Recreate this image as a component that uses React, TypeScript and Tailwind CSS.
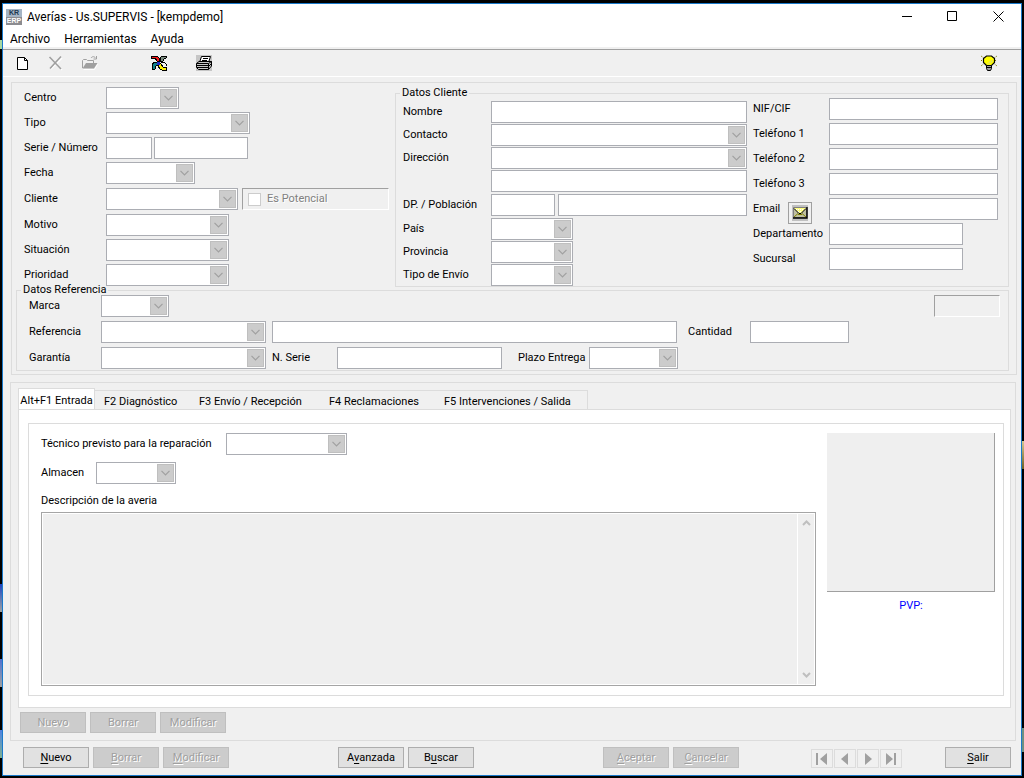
import React, { useState } from 'react';

const tabs = [
  { name: 'F2 Diagnóstico', width: 'w-[95px]' },
  { name: 'F3 Envío / Recepción', width: 'w-[130px]' },
  { name: 'F4 Reclamaciones', width: 'w-[115px]' },
  { name: 'F5 Intervenciones / Salida', width: 'w-[152px]' },
];

const phoneFields = [
  { id: 'nif', label: 'NIF/CIF' },
  { id: 'telefono1', label: 'Teléfono 1' },
  { id: 'telefono2', label: 'Teléfono 2' },
  { id: 'telefono3', label: 'Teléfono 3' },
];

type FieldProps = { id: string; label?: string; className?: string };

const Combo: React.FC<FieldProps> = ({ id, label, className = '' }) => (
  <div className={`relative h-[22px] shrink-0 ${className}`}>
    <select
      id={id}
      aria-label={label}
      disabled
      className="block w-full h-full appearance-none bg-white border border-[#abadb3] px-1 opacity-100"
    ></select>
    <span className="absolute right-[2px] top-[2px] w-[17px] h-[18px] bg-[#cccccc] border border-[#bfbfbf] flex items-center justify-center pointer-events-none">
      <svg className="w-[9px] h-[6px]" viewBox="0 0 9 6" fill="none" stroke="#a0a0a0" strokeWidth="1.2">
        <path d="M0.5 0.8L4.5 4.8L8.5 0.8" />
      </svg>
    </span>
  </div>
);

const TextBox: React.FC<FieldProps> = ({ id, label, className = '' }) => (
  <input
    id={id}
    aria-label={label}
    type="text"
    disabled
    className={`block h-[22px] min-w-0 bg-white border border-[#abadb3] px-1 ${className}`}
  />
);

type RowProps = { id: string; label: string; labelWidth: string; className?: string; children: React.ReactNode };

const Row: React.FC<RowProps> = ({ id, label, labelWidth, className = 'h-[22px]', children }) => (
  <div className={`flex items-center ${className}`}>
    <label htmlFor={id} className={`shrink-0 whitespace-nowrap ${labelWidth}`}>{label}</label>
    {children}
  </div>
);

type ButtonProps = { text: string; hotkey?: number; disabled?: boolean };

const PushButton: React.FC<ButtonProps> = ({ text, hotkey, disabled }) => (
  <button
    type="button"
    disabled={disabled}
    className={`w-[66px] h-[21px] border text-center leading-[19px] ${
      disabled
        ? 'bg-[#cccccc] border-[#bfbfbf] text-[#a0a0a0] [text-shadow:1px_1px_0_#ffffff]'
        : 'bg-[#e1e1e1] border-[#adadad] text-black'
    }`}
  >
    {hotkey === undefined ? text : (
      <>
        {text.slice(0, hotkey)}
        <span className="underline underline-offset-2">{text[hotkey]}</span>
        {text.slice(hotkey + 1)}
      </>
    )}
  </button>
);

const NewIcon = () => (
  <svg className="w-4 h-4" viewBox="0 0 16 16" fill="none">
    <path d="M3.5 2.5H10.5L13.5 5.5V14.5H3.5Z" fill="#fff" stroke="#000" />
    <path d="M10.5 2.5V5.5H13.5" stroke="#000" />
  </svg>
);

const DeleteIcon = () => (
  <svg className="w-4 h-4" viewBox="0 0 16 16" fill="none">
    <path d="M2 3L14 15M14 3L3 14" stroke="#fff" strokeWidth="1.4" />
    <path d="M1.5 2L13 14M13 1.5L2 13.5" stroke="#a0a0a0" strokeWidth="1.6" />
  </svg>
);

const OpenIcon = () => (
  <svg className="w-4 h-4" viewBox="0 0 16 16" fill="none">
    <path d="M1.5 14.5H12.5L15.8 8.5" stroke="#fff" />
    <path d="M0.5 13V5.5L1.5 4.5H4.5L5.5 5.5H11.5V8" stroke="#a0a0a0" />
    <path d="M0.5 13.5L4 8H15.5L12 13.5Z" fill="#a0a0a0" />
    <path d="M9 3C10.5 1 12.5 1.5 13.5 3M14.5 1V4H11.5" stroke="#a0a0a0" />
  </svg>
);

const PinwheelIcon = () => (
  <svg className="w-4 h-4" viewBox="0 0 16 16" fill="none" shapeRendering="crispEdges">
    <path d="M0 1H6L8 3V7L6 6L4 3L0 3Z" fill="#f01818" stroke="#000" />
    <path d="M15 1H11L9 3V7L12 6L13 4L15 3Z" fill="#7b8c80" stroke="#000" />
    <path d="M7 7H4L1 9V15L4 14L5 11L8 9Z" fill="#108088" stroke="#000" />
    <path d="M8 8L7 11L9 14L11 15H15V12H12L10 9Z" fill="#fcf000" stroke="#000" />
    <path d="M10 7H13L15 9V11" stroke="#000" />
    <path d="M6 7H9V10H6Z" fill="#2030c8" />
  </svg>
);

const PrinterIcon = () => (
  <svg className="w-4 h-4" viewBox="0 0 16 16" stroke="#000" fill="none">
    <path d="M0 0H16V16H0Z" fill="#c6c6c6" stroke="none" />
    <path d="M3.5 7.5L5.5 1.5H14.5L12.5 7.5" fill="#fff" />
    <path d="M7 3.5H12M6 5.5H11" />
    <path d="M0.5 8.5L3 6.5H15.5V11L12.5 14.5H2.5L0.5 12.5Z" fill="#c6c6c6" />
    <path d="M0.5 8.5H12.5V14.5M12.5 8.5L15.5 6.5M1 10.5H12M1 12.5H12M13 11L15.5 8.5" />
  </svg>
);

const BulbIcon = () => (
  <svg className="w-4 h-4" viewBox="0 0 16 16" fill="none">
    <path d="M0 1L3 3M16 1L13 3M0 5.5H2M14 5.5H16M0 11L3 8.5M16 11L13 8.5" stroke="#808000" strokeDasharray="1 1" />
    <path d="M5.5 10.5L2.500 7.500V3.500L5.500 1H10.500L13.500 3.500V7.500L10.500 10.500Z" fill="#ffff00" stroke="#000" strokeWidth="1.2" />
    <path d="M8 9.500L12.500 5M6.500 8.500L11 5.500" stroke="#c0c0c0" strokeDasharray="1 1" />
    <path d="M5.500 10.500H10.500V13.500L9.500 15.500H6.500L5.500 13.500Z" fill="#a0a0a0" stroke="#000" />
    <path d="M5.500 12.500H10.500" stroke="#000" />
  </svg>
);

const MailIcon = () => (
  <svg className="w-4 h-4" viewBox="0 0 16 16" fill="none">
    <path d="M0 0H16V16H0Z" fill="#c0c0c0" />
    <path d="M1.5 2.5H14.5V12.5H1.5Z" fill="#c0c0a0" stroke="#808080" />
    <path d="M2 3H14L8 9Z" fill="#ffff80" />
    <path d="M4 4.500H12M6 6.500H10" stroke="#fff" strokeDasharray="1 1" />
    <path d="M2 12L6 8.500M14 12L10 8.500M6 9.500H10" stroke="#808000" />
    <path d="M2 3.500L7 8.500H9L14 3.500" stroke="#000" />
    <path d="M15 2V13H1" stroke="#000" strokeWidth="1.400" />
  </svg>
);

const navIcons = [
  { name: 'Primero', d: 'M0 1H2V13H0ZM11 1V13L4 7Z' },
  { name: 'Anterior', d: 'M9 1V13L2 7Z' },
  { name: 'Siguiente', d: 'M3 1V13L10 7Z' },
  { name: 'Último', d: 'M1 1V13L8 7ZM9 1H11V13H9Z' },
];

// bits of the desktop left and right of the window
const Desktop = () => (
  <div className="absolute inset-0 overflow-hidden pointer-events-none" aria-hidden="true">
    <div className="absolute left-0 top-10 w-[2px] h-[9px] bg-[#a8d8a0]"></div>
    <div className="absolute left-0 top-[584px] w-[2px] h-[28px] bg-gradient-to-b from-[#2040c0] to-[#a0a0a0]"></div>
    <div className="absolute left-0 top-[659px] w-[2px] h-[28px] bg-gradient-to-b from-[#5070d0] to-[#a0a0a0]"></div>
    <div className="absolute left-0 top-[730px] w-[2px] h-[28px] bg-gradient-to-b from-[#5080e0] to-[#80b090]"></div>
    <div className="absolute right-0 top-[441px] w-[2px] h-[28px] bg-gradient-to-b from-[#d8c890] to-[#706020]"></div>
    <div className="absolute right-0 top-[728px] w-[2px] h-[24px] bg-[#709080]"></div>
  </div>
);

const App: React.FC = () => {
  const [activeTab, setActiveTab] = useState('Alt+F1 Entrada');

  return (
    <div className="relative min-h-screen bg-black p-[2px] pt-[3px] flex font-[Roboto,'Liberation_Sans',sans-serif] text-[11px] leading-[14px] text-black">
      <Desktop />
      <div className="relative flex-1 min-w-0 flex flex-col bg-[#f0f0f0] border border-[#1979ca]">
        {/* Title bar */}
        <header className="flex items-center h-[25px] pl-[3px] bg-white text-[12px] leading-4">
          <span className="w-4 h-4 shrink-0 flex flex-col text-center font-['Liberation_Sans',Arial,sans-serif] text-[7px] leading-2 font-bold">
            <span className="bg-[#a4b4c4] text-[#203850]">KR</span>
            <span className="bg-[#8c8c90] text-white">ERP</span>
          </span>
          <h1 className="ml-[5px] flex-1 whitespace-nowrap">Averías - Us.SUPERVIS - [kempdemo]</h1>
          <button type="button" aria-label="Minimizar" className="w-[45px] h-full flex items-center justify-center">
            <svg className="w-[11px] h-[11px]" viewBox="0 0 11 11" stroke="#000"><path d="M0 5.5H10" /></svg>
          </button>
          <button type="button" aria-label="Maximizar" className="w-[45px] h-full flex items-center justify-center">
            <svg className="w-[11px] h-[11px]" viewBox="0 0 11 11" stroke="#000" fill="none"><path d="M0.5 0.5H9.5V9.5H0.5Z" /></svg>
          </button>
          <button type="button" aria-label="Cerrar" className="w-[46px] h-full flex items-center justify-center">
            <svg className="w-[11px] h-[11px]" viewBox="0 0 11 11" stroke="#000"><path d="M0.5 0.5L10.5 10.5M10.5 0.5L0.5 10.5" /></svg>
          </button>
        </header>

        {/* Menu */}
        <nav className="flex items-end gap-[14px] h-[18px] pl-[7px] bg-white text-[12px] leading-4">
          <button type="button">Archivo</button>
          <button type="button">Herramientas</button>
          <button type="button">Ayuda</button>
        </nav>

        {/* Toolbar */}
        <div className="mt-[2px] flex items-center h-7 pl-[11px] pr-6 border-t border-t-[#a0a0a0] border-b border-b-white">
          <div className="flex gap-[18px]">
            <button type="button" aria-label="Nuevo"><NewIcon /></button>
            <button type="button" aria-label="Borrar" disabled><DeleteIcon /></button>
            <button type="button" aria-label="Abrir" disabled><OpenIcon /></button>
          </div>
          <div className="ml-[53px] flex gap-[29px]">
            <button type="button" aria-label="Kemp"><PinwheelIcon /></button>
            <button type="button" aria-label="Imprimir"><PrinterIcon /></button>
          </div>
          <button type="button" aria-label="Consejo" className="ml-auto"><BulbIcon /></button>
        </div>

        {/* Header data */}
        <section className="mt-[5px] ml-2 mr-1 border border-[#dcdcdc] pt-1 pb-[3px]">
          <div className="flex pl-3 pr-[7px]">
            <div className="w-[365px] shrink-0 flex flex-col gap-[3px]">
              <Row id="centro" label="Centro" labelWidth="w-[82px]"><Combo id="centro" className="w-[73px]" /></Row>
              <Row id="tipo" label="Tipo" labelWidth="w-[82px]"><Combo id="tipo" className="w-[144px]" /></Row>
              <Row id="serie" label="Serie / Número" labelWidth="w-[82px]">
                <TextBox id="serie" className="w-[46px]" />
                <TextBox id="numero" label="Número" className="ml-[2px] w-[94px]" />
              </Row>
              <Row id="fecha" label="Fecha" labelWidth="w-[82px]"><Combo id="fecha" className="w-[89px]" /></Row>
              <Row id="cliente" label="Cliente" labelWidth="w-[82px]" className="h-6">
                <Combo id="cliente" className="w-[132px]" />
                <label className="ml-1 flex-1 h-[22px] flex items-center gap-[6px] pl-[5px] border border-t-[#a0a0a0] border-l-[#a0a0a0] border-b-white border-r-white text-[#808080] [text-shadow:1px_1px_0_#ffffff]">
                  <input type="checkbox" disabled className="appearance-none w-[13px] h-[13px] bg-white border border-[#cccccc]" />
                  Es Potencial
                </label>
              </Row>
              <Row id="motivo" label="Motivo" labelWidth="w-[82px]"><Combo id="motivo" className="w-[123px]" /></Row>
              <Row id="situacion" label="Situación" labelWidth="w-[82px]"><Combo id="situacion" className="w-[123px]" /></Row>
              <Row id="prioridad" label="Prioridad" labelWidth="w-[82px]"><Combo id="prioridad" className="w-[123px]" /></Row>
            </div>

            <fieldset className="ml-[6px] mt-px flex-1 min-w-0 border border-[#dcdcdc] pl-[7px] pr-[10px]">
              <legend className="-ml-[3px] px-[2px] leading-[10px]">Datos Cliente</legend>
              <div className="flex gap-[6px]">
                <div className="flex-1 min-w-0 flex flex-col gap-px pt-[3px]">
                  <Row id="nombre" label="Nombre" labelWidth="w-[88px]"><TextBox id="nombre" className="flex-1" /></Row>
                  <Row id="contacto" label="Contacto" labelWidth="w-[88px]"><Combo id="contacto" className="flex-1" /></Row>
                  <Row id="direccion" label="Dirección" labelWidth="w-[88px]"><Combo id="direccion" className="flex-1" /></Row>
                  <TextBox id="direccion2" label="Dirección 2" className="ml-[88px]" />
                  <Row id="dp" label="DP. / Población" labelWidth="w-[88px]" className="h-6">
                    <TextBox id="dp" className="w-16" />
                    <TextBox id="poblacion" label="Población" className="ml-[3px] flex-1" />
                  </Row>
                  <Row id="pais" label="País" labelWidth="w-[88px]"><Combo id="pais" className="w-[82px]" /></Row>
                  <Row id="provincia" label="Provincia" labelWidth="w-[88px]"><Combo id="provincia" className="w-[82px]" /></Row>
                  <Row id="envio" label="Tipo de Envío" labelWidth="w-[88px]"><Combo id="envio" className="w-[82px]" /></Row>
                </div>
                <div className="w-[245px] shrink-0 flex flex-col gap-[3px]">
                  {phoneFields.map((field) => (
                    <Row key={field.id} id={field.id} label={field.label} labelWidth="w-[76px]">
                      <TextBox id={field.id} className="flex-1" />
                    </Row>
                  ))}
                  <Row id="email" label="Email" labelWidth="w-[35px]">
                    <button type="button" aria-label="Enviar email" className="relative top-1 w-6 h-[22px] mr-[17px] shrink-0 flex items-center justify-center border border-[#a0a0a0]">
                      <MailIcon />
                    </button>
                    <TextBox id="email" className="flex-1" />
                  </Row>
                  <Row id="departamento" label="Departamento" labelWidth="w-[76px]"><TextBox id="departamento" className="w-[134px]" /></Row>
                  <Row id="sucursal" label="Sucursal" labelWidth="w-[76px]"><TextBox id="sucursal" className="w-[134px]" /></Row>
                </div>
              </div>
            </fieldset>
          </div>

          <fieldset className="-mt-[2px] ml-1 mr-[7px] min-w-0 border border-[#dcdcdc] pl-3 pr-2 pb-px">
            <legend className="-ml-2 px-[2px] leading-[10px]">Datos Referencia</legend>
            <div className="flex flex-col gap-1">
              <Row id="marca" label="Marca" labelWidth="w-[72px]">
                <Combo id="marca" className="w-[68px]" />
                <output className="ml-auto w-[66px] h-[22px] border border-t-[#a0a0a0] border-l-[#a0a0a0] border-b-white border-r-white"></output>
              </Row>
              <Row id="referencia" label="Referencia" labelWidth="w-[72px]">
                <Combo id="referencia" className="w-[165px]" />
                <TextBox id="descripcionRef" label="Descripción referencia" className="ml-[6px] flex-1 max-w-[405px]" />
                <label htmlFor="cantidad" className="ml-[11px] w-[62px] shrink-0">Cantidad</label>
                <TextBox id="cantidad" className="w-[99px]" />
              </Row>
              <Row id="garantia" label="Garantía" labelWidth="w-[72px]">
                <Combo id="garantia" className="w-[165px]" />
                <label htmlFor="nserie" className="ml-[6px] w-[65px] shrink-0">N. Serie</label>
                <TextBox id="nserie" className="w-[165px]" />
                <label htmlFor="plazo" className="ml-4 w-[71px] shrink-0 whitespace-nowrap">Plazo Entrega</label>
                <Combo id="plazo" className="w-[89px]" />
              </Row>
            </div>
          </fieldset>
        </section>

        {/* Tabbed data */}
        <section className="mt-[7px] ml-[7px] mr-[5px] flex-1 flex flex-col border border-[#dcdcdc] pt-[5px] pl-[7px] pr-1 pb-[7px]">
          <div role="tablist" className="flex items-end">
            <button
              type="button"
              role="tab"
              aria-selected={activeTab === 'Alt+F1 Entrada'}
              onClick={() => setActiveTab('Alt+F1 Entrada')}
              className={`w-[77px] h-[21px] pt-[3px] whitespace-nowrap text-center border border-b-0 border-[#dcdcdc] ${activeTab === 'Alt+F1 Entrada' ? 'bg-white' : ''}`}
            >
              Alt+F1 Entrada
            </button>
            <div className="flex h-[19px] border-t border-r border-[#dcdcdc]">
              {tabs.map((tab) => (
                <button
                  key={tab.name}
                  type="button"
                  role="tab"
                  aria-selected={activeTab === tab.name}
                  onClick={() => setActiveTab(tab.name)}
                  className={`pt-[3px] pl-[9px] text-left whitespace-nowrap ${tab.width} ${activeTab === tab.name ? 'bg-white' : ''}`}
                >
                  {tab.name}
                </button>
              ))}
            </div>
          </div>

          <div className="flex-1 flex flex-col bg-white border border-[#dcdcdc] pt-[13px] pl-[9px] pb-[11px] pr-[6px]">
            <div className="flex-1 flex gap-[11px] border border-[#dcdcdc] pt-[9px] pl-3 pr-2 pb-[9px]">
              <div className="flex-1 min-w-0 flex flex-col">
                <Row id="tecnico" label="Técnico previsto para la reparación" labelWidth="w-[185px]">
                  <Combo id="tecnico" className="w-[121px]" />
                </Row>
                <Row id="almacen" label="Almacen" labelWidth="w-[55px]" className="mt-[7px] h-[22px]">
                  <Combo id="almacen" className="w-20" />
                </Row>
                <label htmlFor="descripcion" className="mt-[10px]">Descripción de la averia</label>
                <div className="mt-1 flex-1 min-h-[120px] flex gap-px bg-white border border-[#a5a5a5] p-px">
                  <textarea id="descripcion" disabled className="flex-1 min-w-0 resize-none bg-[#efefef] p-1"></textarea>
                  <div className="w-4 flex flex-col items-center justify-between py-[6px] bg-[#efefef]">
                    <svg className="w-[9px] h-[6px]" viewBox="0 0 9 6" fill="none" stroke="#bfbfbf" strokeWidth="2"><path d="M1 5L4.500 1.500L8 5" /></svg>
                    <svg className="w-[9px] h-[6px]" viewBox="0 0 9 6" fill="none" stroke="#bfbfbf" strokeWidth="2"><path d="M1 1L4.500 4.500L8 1" /></svg>
                  </div>
                </div>
              </div>
              <div className="w-[168px] shrink-0 flex flex-col items-center">
                <div className="w-full h-[159px] bg-[#efefef] border-r border-b border-[#a0a0a0]"></div>
                <span className="mt-[7px] text-[#0000ff]">PVP:</span>
              </div>
            </div>
          </div>

          <div className="mt-1 pl-[2px] flex gap-1">
            <PushButton text="Nuevo" disabled />
            <PushButton text="Borrar" disabled />
            <PushButton text="Modificar" disabled />
          </div>
        </section>

        {/* Bottom buttons */}
        <footer className="grid grid-cols-[315fr_265fr_208fr_134fr_66px] items-end pt-[6px] pb-[7px] pl-5 pr-[10px]">
          <div className="flex gap-1">
            <PushButton text="Nuevo" hotkey={0} />
            <PushButton text="Borrar" hotkey={0} disabled />
            <PushButton text="Modificar" hotkey={0} disabled />
          </div>
          <div className="flex gap-1">
            <PushButton text="Avanzada" hotkey={1} />
            <PushButton text="Buscar" hotkey={1} />
          </div>
          <div className="flex gap-1">
            <PushButton text="Aceptar" hotkey={0} disabled />
            <PushButton text="Cancelar" hotkey={0} disabled />
          </div>
          <div className="flex gap-px">
            {navIcons.map((icon) => (
              <button key={icon.name} type="button" aria-label={icon.name} disabled className="w-[22px] h-[19px] flex items-center justify-center border border-[#dcdcdc]">
                <svg className="w-3 h-[14px]" viewBox="0 0 12 14" fill="#a0a0a0"><path d={icon.d} /></svg>
              </button>
            ))}
          </div>
          <PushButton text="Salir" hotkey={0} />
        </footer>
      </div>
    </div>
  );
};

export default App;
